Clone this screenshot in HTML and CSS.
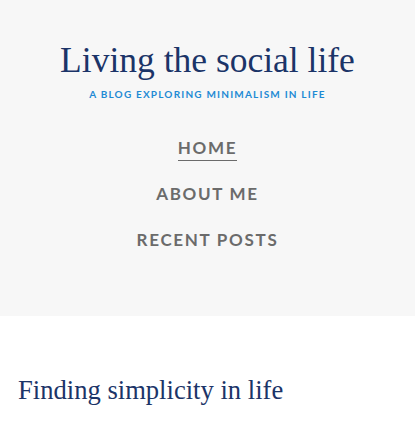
FILE: index.html
```html
<!DOCTYPE html>
<html>
<head>
<meta charset="utf-8">
<link rel="stylesheet" href="styles.css">
</head>
<body>
<header class="site-header">
  <h1 class="site-title">Living the social life</h1>
  <p class="tagline">A blog exploring minimalism in life</p>
  <nav class="menu">
    <a class="menu-item current" href="#">Home</a>
    <a class="menu-item" href="#">About me</a>
    <a class="menu-item" href="#">Recent posts</a>
  </nav>
</header>
<main class="content">
  <h2 class="post-title">Finding simplicity in life</h2>
</main>
</body>
</html>
```
FILE: styles.css
```css
html, body {
  margin: 0;
  padding: 0;
  background: #ffffff;
}
body {
  font-family: "Liberation Serif", serif;
  overflow: hidden;
}
.site-header {
  background: #f7f7f7;
  height: 316px;
  box-sizing: border-box;
  padding-top: 39px;
  display: flex;
  flex-direction: column;
  align-items: center;
}
.site-title {
  margin: 0;
  font-family: "Liberation Serif", serif;
  font-weight: normal;
  font-size: 35.5px;
  line-height: 42px;
  color: #1b3468;
}
.tagline {
  margin: 6px 0 0;
  font-family: Lato, sans-serif;
  font-weight: 700;
  font-size: 10px;
  line-height: 14px;
  letter-spacing: 1.2px;
  text-transform: uppercase;
  color: #1e8ad4;
}
.menu {
  margin-top: 37px;
  display: flex;
  flex-direction: column;
  align-items: center;
  gap: 26px;
}
.menu-item {
  font-family: Lato, sans-serif;
  font-weight: 700;
  font-size: 17px;
  line-height: 20px;
  letter-spacing: 1.7px;
  text-transform: uppercase;
  text-decoration: none;
  color: #6b6b6b;
}
.menu-item.current {
  border-bottom: 1px solid #6b6b6b;
  padding-bottom: 2px;
  margin-bottom: -3px;
}
.content {
  padding: 57px 18px 0;
}
.post-title {
  margin: 0;
  font-family: "Liberation Serif", serif;
  font-weight: normal;
  font-size: 26.6px;
  line-height: 34px;
  color: #1b3468;
}
```
